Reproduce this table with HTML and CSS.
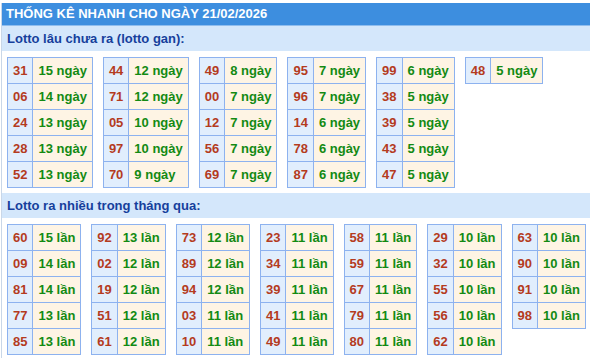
FILE: index.html
```html
<!DOCTYPE html>
<html lang="vi">
<head>
<meta charset="utf-8">
<title>Thống kê nhanh</title>
<link rel="stylesheet" href="styles.css">
</head>
<body>
<div class="wrap">
  <div class="title">THỐNG KÊ NHANH CHO NGÀY 21/02/2026</div>
  <div class="sub">Lotto lâu chưa ra (lotto gan):</div>
  <div class="tables">
    <table><tr><td class="n">31</td><td class="v">15 ngày</td></tr><tr><td class="n">06</td><td class="v">14 ngày</td></tr><tr><td class="n">24</td><td class="v">13 ngày</td></tr><tr><td class="n">28</td><td class="v">13 ngày</td></tr><tr><td class="n">52</td><td class="v">13 ngày</td></tr></table>
    <table><tr><td class="n">44</td><td class="v">12 ngày</td></tr><tr><td class="n">71</td><td class="v">12 ngày</td></tr><tr><td class="n">05</td><td class="v">10 ngày</td></tr><tr><td class="n">97</td><td class="v">10 ngày</td></tr><tr><td class="n">70</td><td class="v">9 ngày</td></tr></table>
    <table><tr><td class="n">49</td><td class="v">8 ngày</td></tr><tr><td class="n">00</td><td class="v">7 ngày</td></tr><tr><td class="n">12</td><td class="v">7 ngày</td></tr><tr><td class="n">56</td><td class="v">7 ngày</td></tr><tr><td class="n">69</td><td class="v">7 ngày</td></tr></table>
    <table><tr><td class="n">95</td><td class="v">7 ngày</td></tr><tr><td class="n">96</td><td class="v">7 ngày</td></tr><tr><td class="n">14</td><td class="v">6 ngày</td></tr><tr><td class="n">78</td><td class="v">6 ngày</td></tr><tr><td class="n">87</td><td class="v">6 ngày</td></tr></table>
    <table><tr><td class="n">99</td><td class="v">6 ngày</td></tr><tr><td class="n">38</td><td class="v">5 ngày</td></tr><tr><td class="n">39</td><td class="v">5 ngày</td></tr><tr><td class="n">43</td><td class="v">5 ngày</td></tr><tr><td class="n">47</td><td class="v">5 ngày</td></tr></table>
    <table><tr><td class="n">48</td><td class="v">5 ngày</td></tr></table>
  </div>
  <div class="sub">Lotto ra nhiều trong tháng qua:</div>
  <div class="tables">
    <table><tr><td class="n">60</td><td class="v">15 lần</td></tr><tr><td class="n">09</td><td class="v">14 lần</td></tr><tr><td class="n">81</td><td class="v">14 lần</td></tr><tr><td class="n">77</td><td class="v">13 lần</td></tr><tr><td class="n">85</td><td class="v">13 lần</td></tr></table>
    <table><tr><td class="n">92</td><td class="v">13 lần</td></tr><tr><td class="n">02</td><td class="v">12 lần</td></tr><tr><td class="n">19</td><td class="v">12 lần</td></tr><tr><td class="n">51</td><td class="v">12 lần</td></tr><tr><td class="n">61</td><td class="v">12 lần</td></tr></table>
    <table><tr><td class="n">73</td><td class="v">12 lần</td></tr><tr><td class="n">89</td><td class="v">12 lần</td></tr><tr><td class="n">94</td><td class="v">12 lần</td></tr><tr><td class="n">03</td><td class="v">11 lần</td></tr><tr><td class="n">10</td><td class="v">11 lần</td></tr></table>
    <table><tr><td class="n">23</td><td class="v">11 lần</td></tr><tr><td class="n">34</td><td class="v">11 lần</td></tr><tr><td class="n">39</td><td class="v">11 lần</td></tr><tr><td class="n">41</td><td class="v">11 lần</td></tr><tr><td class="n">49</td><td class="v">11 lần</td></tr></table>
    <table><tr><td class="n">58</td><td class="v">11 lần</td></tr><tr><td class="n">59</td><td class="v">11 lần</td></tr><tr><td class="n">67</td><td class="v">11 lần</td></tr><tr><td class="n">79</td><td class="v">11 lần</td></tr><tr><td class="n">80</td><td class="v">11 lần</td></tr></table>
    <table><tr><td class="n">29</td><td class="v">10 lần</td></tr><tr><td class="n">32</td><td class="v">10 lần</td></tr><tr><td class="n">55</td><td class="v">10 lần</td></tr><tr><td class="n">56</td><td class="v">10 lần</td></tr><tr><td class="n">62</td><td class="v">10 lần</td></tr></table>
    <table><tr><td class="n">63</td><td class="v">10 lần</td></tr><tr><td class="n">90</td><td class="v">10 lần</td></tr><tr><td class="n">91</td><td class="v">10 lần</td></tr><tr><td class="n">98</td><td class="v">10 lần</td></tr></table>
  </div>
</div>
</body>
</html>
```
FILE: styles.css
```css
html, body {
  margin: 0;
  padding: 0;
  background: #ffffff;
}
body {
  font-family: "Liberation Sans", Arial, sans-serif;
  font-size: 13px;
}
.wrap {
  margin: 3px 0 0 1px;
  border-left: 1px solid #c9d7e8;
}
.title {
  background: #3d8edf;
  color: #ffffff;
  font-weight: bold;
  font-size: 13px;
  line-height: 22px;
  padding-left: 4px;
  border-bottom: 1px solid #8fbdee;
}
.sub {
  background: #d4e7fb;
  color: #163f9c;
  font-weight: bold;
  font-size: 13px;
  line-height: 25px;
  padding-left: 5px;
}
.tables {
  display: flex;
  flex-wrap: wrap;
  align-items: flex-start;
  gap: 10px;
  padding: 6px 0 5px 5px;
}
table {
  border-collapse: collapse;
}
td {
  border: 1px solid #8db2ef;
  padding: 5px 5px;
  line-height: 15px;
  font-weight: bold;
  font-size: 13px;
  white-space: nowrap;
}
td.n {
  background: #e1eefd;
  color: #b43b1e;
  text-align: center;
}
td.v {
  background: #fef4e4;
  color: #138a13;
  text-align: left;
}
```
